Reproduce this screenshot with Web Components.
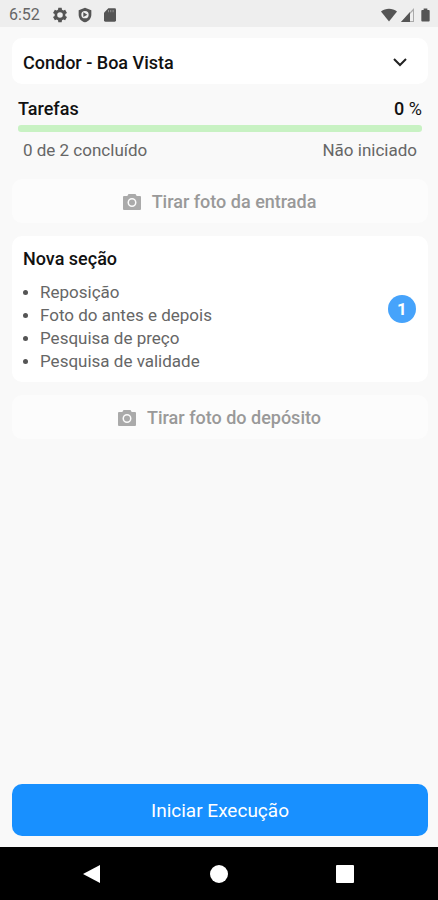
<!DOCTYPE html>
<html lang="pt-BR">
<head>
  <meta charset="UTF-8">
  <meta name="viewport" content="width=device-width, initial-scale=1.0">
  <title>Tarefas</title>
  <style>
    body {
      margin: 0;
      background-color: #f9f9f9;
      color: #111;
      font-family: Roboto, "Liberation Sans", sans-serif;
      font-size: 17px;
      line-height: 20px;
    }
  </style>
</head>
<body>
  <app-screen>
    <status-bar slot="status" time="6:52"></status-bar>
    <store-select label="Loja">Condor - Boa Vista</store-select>
    <task-progress value="0" max="2">
      Tarefas
      <span slot="done">0 de 2 concluído</span>
      <span slot="state">Não iniciado</span>
    </task-progress>
    <photo-button>Tirar foto da entrada</photo-button>
    <section-card count="1">
      <span slot="title">Nova seção</span>
      <task-item>Reposição</task-item>
      <task-item>Foto do antes e depois</task-item>
      <task-item>Pesquisa de preço</task-item>
      <task-item>Pesquisa de validade</task-item>
    </section-card>
    <photo-button>Tirar foto do depósito</photo-button>
    <start-button slot="action">Iniciar Execução</start-button>
    <nav-bar slot="nav"></nav-bar>
  </app-screen>

  <template id="app-screen">
    <style>
      :host {
        display: flex;
        flex-direction: column;
        min-height: 100vh;
      }
      main {
        flex: 1;
        display: flex;
        flex-direction: column;
        gap: 13px;
        padding: 11px 10px 11px 12px;
      }
      .action {
        margin-top: auto;
      }
    </style>
    <slot name="status"></slot>
    <main>
      <slot></slot>
      <div class="action"><slot name="action"></slot></div>
    </main>
    <slot name="nav"></slot>
  </template>

  <template id="status-bar">
    <style>
      :host {
        display: flex;
        align-items: center;
        box-sizing: border-box;
        height: 27px;
        padding: 2px 6px 0 9px;
        background-color: #eee;
        color: #666;
        font-size: 16px;
      }
      .icons {
        display: flex;
        align-items: center;
        gap: 9px;
        margin-left: 12px;
      }
      .icons.right {
        gap: 4px;
        margin-left: auto;
      }
      svg {
        display: block;
        fill: #555;
      }
    </style>
    <span class="time"></span>
    <div class="icons">
      <svg width="16" height="16" viewBox="0 0 24 24"><path fill-rule="evenodd" d="M20 13.500v-3l2.500-1.500-2.800-5-2.700 1.300-2-1.200L14.500 1h-5L9 4.100 7 5.300 4.300 4 1.500 9 4 10.500v3L1.500 15l2.800 5L7 18.700l2 1.200.5 3.100h5l.5-3.100 2-1.200 2.700 1.300 2.800-5zM12 16.200a4.200 4.200 0 1 1 0-8.400 4.200 4.200 0 0 1 0 8.400z"/></svg>
      <svg width="16" height="16" viewBox="0 0 24 24"><path fill-rule="evenodd" d="M12 1 2.500 5v6.500C2.500 17 6.500 21.700 12 23c5.500-1.300 9.500-6 9.500-11.500V5zM12 6a5.500 5.500 0 1 1 0 11 5.500 5.500 0 0 1 0-11z"/><path d="m9.500 8 6 3.500-6 3.500z"/></svg>
      <svg width="16" height="16" viewBox="0 0 24 24"><path d="M9.500 2H19a2 2 0 0 1 2 2v16a2 2 0 0 1-2 2H5a2 2 0 0 1-2-2V8.500z"/><path fill="#999" d="M9 4.500h1.300V8H9zm3.500 0h1.300V8h-1.300zm3.500 0h1.300V8H16z"/></svg>
    </div>
    <div class="icons right">
      <svg width="16" height="14" viewBox="0 0 16 14"><path d="M0 3.500C4.500-.2 11.500-.2 16 3.500L8 13.500z"/></svg>
      <svg width="14" height="14" viewBox="0 0 14 14"><path fill="#aaa" d="M13 0v14H0z"/><path fill="#eee" d="M9 6l3-3v10H9z"/><path d="M9 4v10H0z"/></svg>
      <svg width="13" height="14" viewBox="0 0 14 14"><path d="M5 0h4v1.500h1.500q1 0 1 1V13q0 1-1 1h-7q-1 0-1-1V2.500q0-1 1-1H5z"/></svg>
    </div>
  </template>

  <template id="store-select">
    <style>
      :host {
        display: grid;
        align-items: center;
        border-radius: 10px;
        background-color: #fff;
      }
      select, svg {
        grid-area: 1 / 1;
      }
      select {
        appearance: none;
        width: 100%;
        height: 46px;
        margin: 0;
        padding: 4px 48px 0 11px;
        border: 0;
        border-radius: 10px;
        background: none;
        color: #111;
        font: 500 18px/20px Roboto, "Liberation Sans", sans-serif;
      }
      svg {
        justify-self: end;
        margin-right: 20px;
        fill: none;
        stroke: #222;
        stroke-width: 2;
        pointer-events: none;
      }
    </style>
    <select><option></option></select>
    <svg width="16" height="16" viewBox="0 0 16 16"><path d="m2 6 6 6 6-6"/></svg>
  </template>

  <template id="task-progress">
    <style>
      :host {
        display: block;
        padding: 2px 6px 6px;
      }
      .row {
        display: flex;
        justify-content: space-between;
      }
      .head {
        font-size: 18px;
        font-weight: 500;
      }
      .sign {
        font-weight: 400;
      }
      progress {
        appearance: none;
        display: block;
        width: 100%;
        height: 7px;
        margin: 6px 0 8px;
        border: 0;
        border-radius: 3px;
        overflow: hidden;
        background-color: #c8f2c3;
      }
      progress::-webkit-progress-bar {
        background-color: #c8f2c3;
      }
      progress::-webkit-progress-value {
        background-color: #52c41a;
      }
      .foot {
        padding: 0 5px;
        color: #666;
      }
    </style>
    <div class="row head">
      <label for="bar"><slot></slot></label>
      <span><span class="percent"></span> <span class="sign">%</span></span>
    </div>
    <progress id="bar"></progress>
    <div class="row foot">
      <slot name="done"></slot>
      <slot name="state"></slot>
    </div>
  </template>

  <template id="photo-button">
    <style>
      :host {
        display: block;
      }
      button {
        display: flex;
        justify-content: center;
        align-items: center;
        gap: 10px;
        width: 100%;
        height: 44px;
        margin: 0;
        padding: 2px 2px 0 0;
        border: 0;
        border-radius: 10px;
        background-color: #fcfcfc;
        color: #999;
        font: 500 18px/20px Roboto, "Liberation Sans", sans-serif;
      }
      svg {
        fill: #aaa;
      }
    </style>
    <button type="button" disabled>
      <svg width="20" height="18" viewBox="0 0 20 18"><path fill-rule="evenodd" d="M6.500 1h7l1.200 2H18q1 0 1 1V16q0 1-1 1H2q-1 0-1-1V4q0-1 1-1h3.300zM10 5a4.500 4.500 0 1 0 0 9 4.500 4.500 0 0 0 0-9z"/><circle cx="10" cy="9.500" r="3"/></svg>
      <slot></slot>
    </button>
  </template>

  <template id="section-card">
    <style>
      :host {
        display: flex;
        align-items: center;
        justify-content: space-between;
        padding: 9px 12px 9px 11px;
        border-radius: 10px;
        background-color: #fff;
      }
      h2 {
        margin: 0 0 8px;
        font-size: 18px;
        font-weight: 500;
        line-height: 28px;
      }
      .count {
        display: flex;
        flex: none;
        justify-content: center;
        align-items: center;
        width: 28px;
        height: 28px;
        border-radius: 50%;
        background-color: #46a3fb;
        color: #fff;
        font-weight: 700;
      }
    </style>
    <div>
      <h2><slot name="title"></slot></h2>
      <div role="list"><slot></slot></div>
    </div>
    <span class="count"></span>
  </template>

  <template id="task-item">
    <style>
      :host {
        display: flex;
        align-items: center;
        gap: 12px;
        color: #666;
        line-height: 23px;
      }
      :host::before {
        content: "";
        width: 5px;
        height: 5px;
        border-radius: 50%;
        background-color: #555;
      }
    </style>
    <slot></slot>
  </template>

  <template id="start-button">
    <style>
      :host {
        display: block;
      }
      button {
        width: 100%;
        height: 52px;
        margin: 0;
        padding: 2px 0 0;
        border: 0;
        border-radius: 10px;
        background-color: #1890ff;
        color: #fff;
        font: 400 19px/24px Roboto, "Liberation Sans", sans-serif;
      }
    </style>
    <button type="button"><slot></slot></button>
  </template>

  <template id="nav-bar">
    <style>
      :host {
        display: flex;
        justify-content: center;
        align-items: center;
        gap: 98px;
        height: 53px;
        background-color: #000;
      }
      button {
        display: block;
        margin: 0;
        padding: 0;
        border: 0;
        background: none;
      }
      svg {
        display: block;
        fill: #fff;
      }
    </style>
    <button type="button" aria-label="Voltar"><svg width="28" height="20" viewBox="0 0 28 20"><path d="M4 10 21 1v18z"/></svg></button>
    <button type="button" aria-label="Início"><svg width="28" height="20" viewBox="0 0 28 20"><circle cx="14" cy="10" r="9"/></svg></button>
    <button type="button" aria-label="Recentes"><svg width="28" height="20" viewBox="0 0 28 20"><rect x="5" y="1" width="18" height="18" rx="1"/></svg></button>
  </template>

  <script>
    class BaseElement extends HTMLElement {
      constructor() { super();
        const template = document.querySelector('#' + this.localName);
        this.attachShadow({ mode: 'open' });
        this.shadowRoot.append(template.content.cloneNode(true));
      }
    }

    customElements.define('app-screen', class extends BaseElement {});
    customElements.define('photo-button', class extends BaseElement {});
    customElements.define('start-button', class extends BaseElement {});
    customElements.define('nav-bar', class extends BaseElement {});

    customElements.define('status-bar', class extends BaseElement {
      connectedCallback() {
        this.shadowRoot.querySelector('.time').textContent = this.getAttribute('time');
      }
    });

    customElements.define('store-select', class extends BaseElement {
      connectedCallback() {
        const select = this.shadowRoot.querySelector('select');
        select.setAttribute('aria-label', this.getAttribute('label'));
        select.options[0].textContent = this.textContent;
      }
    });

    customElements.define('task-progress', class extends BaseElement {
      connectedCallback() {
        const bar = this.shadowRoot.querySelector('progress');
        bar.max = this.getAttribute('max');
        bar.value = this.getAttribute('value');
        this.shadowRoot.querySelector('.percent').textContent = Math.round(bar.position * 100);
      }
    });

    customElements.define('section-card', class extends BaseElement {
      connectedCallback() {
        this.shadowRoot.querySelector('.count').textContent = this.getAttribute('count');
      }
    });

    customElements.define('task-item', class extends BaseElement {
      connectedCallback() {
        this.setAttribute('role', 'listitem');
      }
    });
  </script>
</body>
</html>
